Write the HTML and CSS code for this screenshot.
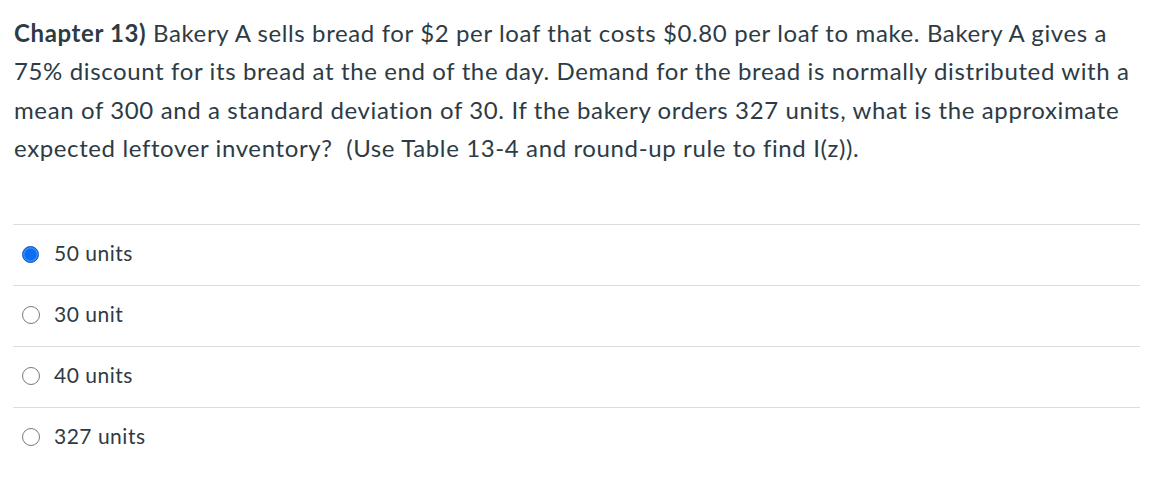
FILE: index.html
```html
<!DOCTYPE html>
<html>
<head>
<meta charset="utf-8">
<link rel="stylesheet" href="styles.css">
</head>
<body>
<div class="question">
  <p class="text"><strong>Chapter 13)</strong> Bakery A sells bread for $2 per loaf that costs $0.80 per loaf to make. Bakery A gives a 75% discount for its bread at the end of the day. Demand for the bread is normally distributed with a mean of 300 and a standard deviation of 30. If the bakery orders 327 units, what is the approximate expected leftover inventory?&nbsp; (Use Table 13-4 and round-up rule to find I(z)).</p>
  <div class="answers">
    <div class="answer"><span class="radio checked"></span><span class="label">50 units</span></div>
    <div class="answer"><span class="radio"></span><span class="label">30 unit</span></div>
    <div class="answer"><span class="radio"></span><span class="label">40 units</span></div>
    <div class="answer"><span class="radio"></span><span class="label">327 units</span></div>
  </div>
</div>
</body>
</html>
```

FILE: styles.css
```css
html, body {
  margin: 0;
  padding: 0;
  background: #ffffff;
}
body {
  font-family: Lato, "Open Sans", sans-serif;
  color: #2d3b45;
}
.question {
  padding: 14px 12px 0 13px;
  width: 1127px;
}
.text {
  margin: 0 0 0 1px;
  font-size: 24px;
  letter-spacing: 0.62px;
  line-height: 38.3px;
}
.text strong {
  font-weight: 700;
}
.answers {
  margin-top: 57px;
  border-top: 1px solid #dcdcdc;
}
.answer {
  display: flex;
  align-items: center;
  height: 60px;
  box-sizing: content-box;
  padding-bottom: 0;
  border-bottom: 1px solid #dcdcdc;
  font-size: 21px;
  letter-spacing: 0.5px;
}
.answer:last-child {
  border-bottom: none;
}
.radio {
  width: 18px;
  height: 18px;
  border: 1.5px solid #7a7a7a;
  border-radius: 50%;
  box-sizing: border-box;
  margin: 0 14px 2px 9px;
  flex: none;
}
.radio.checked {
  width: 17px;
  height: 17px;
  margin: 0 15px 2px 9px;
  background: #0b6ef2;
  border: 1px solid #0a5bd0;
  box-shadow: inset 0 0 0 1.5px #3f8cf6;
}
.label {
  line-height: 24px;
  margin-bottom: 4px;
}
```
